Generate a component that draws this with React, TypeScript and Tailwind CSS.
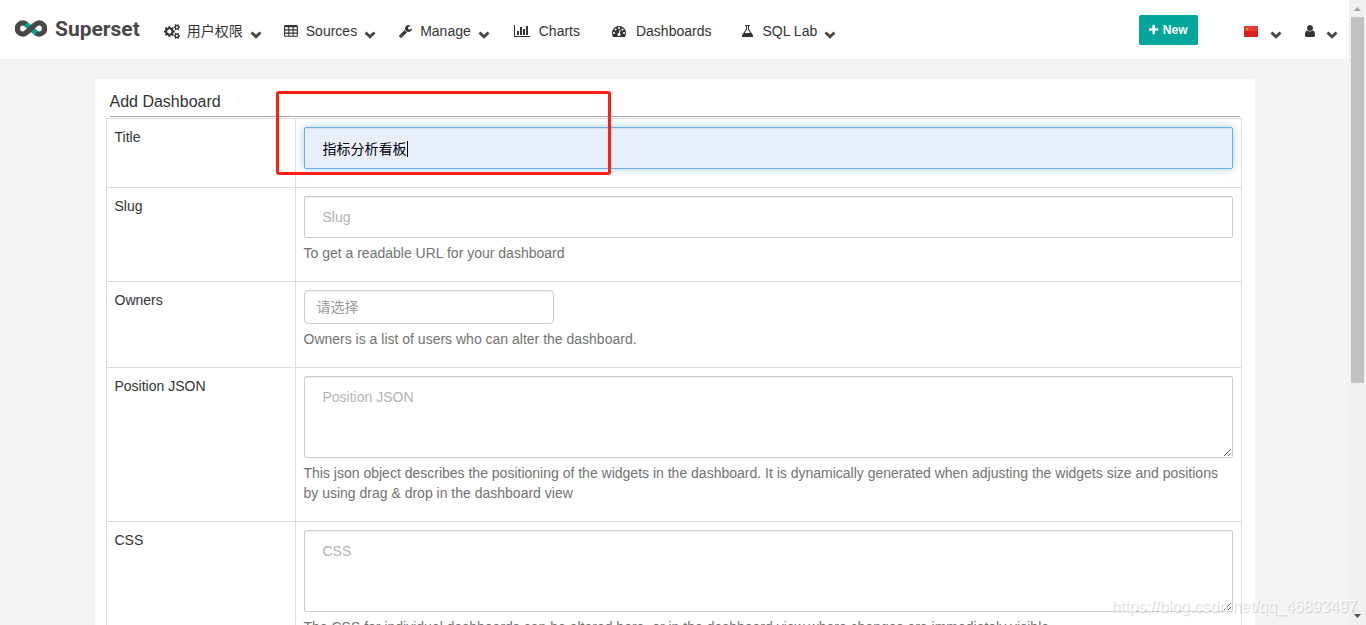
import { useState } from "react";
import type { ReactNode } from "react";

const icons = {
  cogs: {
    box: "0 0 1920 1792",
    d: "M896 896q0-106-75-181t-181-75-181 75-75 181 75 181 181 75 181-75 75-181zm768 512q0-52-38-90t-90-38-90 38-38 90q0 53 37.500 90.500t90.500 37.500 90.500-37.500 37.500-90.500zm0-1024q0-52-38-90t-90-38-90 38-38 90q0 53 37.500 90.500t90.500 37.500 90.500-37.500 37.500-90.500zm-384 421v185q0 10-7 19.500t-16 10.500l-155 24q-11 35-32 76 34 48 90 115 7 11 7 20 0 12-7 19-23 30-82.500 89.500t-78.500 59.500q-11 0-21-7l-115-90q-37 19-77 31-11 108-23 155-7 24-30 24h-186q-11 0-20-7.500t-10-17.500l-23-153q-34-10-75-31l-118 89q-7 7-20 7-11 0-21-8-144-133-144-160 0-9 7-19 10-14 41-53t47-61q-23-44-35-82l-152-24q-10-1-17-9.500t-7-19.500v-185q0-10 7-19.500t16-10.500l155-24q11-35 32-76-34-48-90-115-7-11-7-20 0-12 7-20 22-30 82-89t79-59q11 0 21 7l115 90q34-18 77-32 11-108 23-154 7-24 30-24h186q11 0 20 7.500t10 17.500l23 153q34 10 75 31l118-89q8-7 20-7 11 0 21 8 144 133 144 160 0 8-7 19-12 16-42 54t-45 60q23 48 34 82l152 23q10 2 17 10.500t7 19.500zm640 533v140q0 16-149 31-12 27-30 52 51 113 51 138 0 4-4 7-122 71-124 71-8 0-46-47t-52-68q-20 2-30 2t-30-2q-14 21-52 68t-46 47q-2 0-124-71-4-3-4-7 0-25 51-138-18-25-30-52-149-15-149-31v-140q0-16 149-31 13-29 30-52-51-113-51-138 0-4 4-7 4-2 35-20t59-34 30-16q8 0 46 46.500t52 67.500q20-2 30-2t30 2q51-71 92-112l6-2q4 0 124 70 4 3 4 7 0 25-51 138 17 23 30 52 149 15 149 31zm0-1024v140q0 16-149 31-12 27-30 52 51 113 51 138 0 4-4 7-122 71-124 71-8 0-46-47t-52-68q-20 2-30 2t-30-2q-14 21-52 68t-46 47q-2 0-124-71-4-3-4-7 0-25 51-138-18-25-30-52-149-15-149-31v-140q0-16 149-31 13-29 30-52-51-113-51-138 0-4 4-7 4-2 35-20t59-34 30-16q8 0 46 46.500t52 67.500q20-2 30-2t30 2q51-71 92-112l6-2q4 0 124 70 4 3 4 7 0 25-51 138 17 23 30 52 149 15 149 31z",
  },
  table: {
    box: "0 0 1664 1792",
    d: "M512 1376v-192q0-14-9-23t-23-9h-320q-14 0-23 9t-9 23v192q0 14 9 23t23 9h320q14 0 23-9t9-23zm0-384v-192q0-14-9-23t-23-9h-320q-14 0-23 9t-9 23v192q0 14 9 23t23 9h320q14 0 23-9t9-23zm512 384v-192q0-14-9-23t-23-9h-320q-14 0-23 9t-9 23v192q0 14 9 23t23 9h320q14 0 23-9t9-23zm-512-768v-192q0-14-9-23t-23-9h-320q-14 0-23 9t-9 23v192q0 14 9 23t23 9h320q14 0 23-9t9-23zm512 384v-192q0-14-9-23t-23-9h-320q-14 0-23 9t-9 23v192q0 14 9 23t23 9h320q14 0 23-9t9-23zm512 384v-192q0-14-9-23t-23-9h-320q-14 0-23 9t-9 23v192q0 14 9 23t23 9h320q14 0 23-9t9-23zm-512-768v-192q0-14-9-23t-23-9h-320q-14 0-23 9t-9 23v192q0 14 9 23t23 9h320q14 0 23-9t9-23zm512 384v-192q0-14-9-23t-23-9h-320q-14 0-23 9t-9 23v192q0 14 9 23t23 9h320q14 0 23-9t9-23zm0-384v-192q0-14-9-23t-23-9h-320q-14 0-23 9t-9 23v192q0 14 9 23t23 9h320q14 0 23-9t9-23zm128-320v1088q0 66-47 113t-113 47h-1344q-66 0-113-47t-47-113v-1088q0-66 47-113t113-47h1344q66 0 113 47t47 113z",
  },
  wrench: {
    box: "64 0 1664 1792",
    d: "M448 1472q0-26-19-45t-45-19-45 19-19 45 19 45 45 19 45-19 19-45zm644-420l-682 682q-37 37-90 37-52 0-91-37l-106-108q-38-36-38-90 0-53 38-91l681-681q39 98 114.500 173.500t173.500 114.500zm634-435q0 39-23 106-47 134-164.500 217.500t-258.500 83.500q-185 0-316.500-131.500t-131.500-316.500 131.500-316.500 316.500-131.500q58 0 121.500 16.500t107.500 46.500q16 11 16 28t-16 28l-293 169v224l193 107q5-3 79-48.500t135.500-81 70.500-35.500q15 0 23.500 10t8.500 25z",
  },
  chart: {
    box: "0 0 2048 1792",
    d: "M640 896v512h-256v-512h256zm384-512v1024h-256v-1024h256zm1024 1152v128h-2048v-1536h128v1408h1920zm-640-896v768h-256v-768h256zm384-384v1152h-256v-1152h256z",
  },
  dashboard: {
    box: "0 0 1792 1792",
    d: "M384 1152q0-53-37.500-90.500t-90.500-37.500-90.500 37.500-37.500 90.500 37.500 90.500 90.500 37.500 90.500-37.500 37.500-90.500zm192-448q0-53-37.500-90.500t-90.500-37.500-90.500 37.500-37.500 90.500 37.500 90.500 90.500 37.500 90.500-37.500 37.500-90.500zm428 481l101-382q6-26-7.500-48.500t-38.500-29.500-48 6.500-30 39.500l-101 382q-60 5-107 43.500t-63 98.500q-20 77 20 146t117 89 146-20 89-117q16-60-6-117t-72-91zm660-33q0-53-37.500-90.500t-90.500-37.500-90.500 37.500-37.500 90.500 37.500 90.500 90.500 37.500 90.500-37.500 37.500-90.500zm-640-640q0-53-37.500-90.500t-90.500-37.500-90.500 37.500-37.500 90.500 37.500 90.500 90.500 37.500 90.500-37.500 37.500-90.500zm448 192q0-53-37.500-90.500t-90.500-37.500-90.500 37.500-37.500 90.500 37.500 90.500 90.500 37.500 90.500-37.500 37.500-90.500zm320 448q0 261-141 483-19 29-54 29h-1402q-35 0-54-29-141-221-141-483 0-182 71-348t191-286 286-191 348-71 348 71 286 191 191 286 71 348z",
  },
  flask: {
    box: "0 0 1664 1792",
    d: "M1527 1447q56 89 21.500 153t-140.500 64h-1152q-106 0-140.500-64t21.500-153l503-793v-399h-64q-26 0-45-19t-19-45 19-45 45-19h512q26 0 45 19t19 45-19 45-45 19h-64v399zm-779-725l-272 430h712l-272-430-20-31v-436h-128v436z",
  },
  plus: {
    box: "192 0 1408 1792",
    d: "M1600 736v192q0 40-28 68t-68 28h-416v416q0 40-28 68t-68 28h-192q-40 0-68-28t-28-68v-416h-416q-40 0-68-28t-28-68v-192q0-40 28-68t68-28h416v-416q0-40 28-68t68-28h192q40 0 68 28t28 68v416h416q40 0 68 28t28 68z",
  },
  user: {
    box: "256 0 1280 1792",
    d: "M1536 1399q0 109-62.500 187t-150.500 78h-854q-88 0-150.500-78t-62.500-187q0-85 8.500-160.500t31.500-152 58.500-131 94-89 134.500-34.500q131 128 313 128t313-128q76 0 134.500 34.500t94 89 58.500 131 31.500 152 8.500 160.500zm-256-887q0 159-112.500 271.500t-271.500 112.500-271.500-112.500-112.500-271.500 112.500-271.500 271.500-112.500 271.500 112.500 112.500 271.500z",
  },
};

function Icon({ name, className = "h-[14px]" }: { name: keyof typeof icons; className?: string }) {
  return (
    <svg viewBox={icons[name].box} className={`w-auto ${className}`} fill="currentColor" aria-hidden="true">
      <path d={icons[name].d} />
    </svg>
  );
}

function Caret() {
  return (
    <svg viewBox="0 0 12 8" className="mt-[7px] h-2 w-3 shrink-0" fill="none" aria-hidden="true">
      <path d="M1.500 1.500 6 5.700 10.500 1.500" stroke="#484848" strokeWidth="2.900" />
    </svg>
  );
}

function Logo() {
  return (
    <svg viewBox="0 0 32 17" className="h-[17px] w-8" fill="none" aria-hidden="true">
      <path d="M10 3.400 22 13.800" stroke="#00A699" strokeWidth="5.400" />
      <path
        d="M10.800 4C9.800 3.200 9 2.900 8 2.900a5.400 5.400 0 1 0 0 11.200C12.800 14.100 19.200 2.900 24 2.900a5.400 5.400 0 1 1 0 11.200C23 14.100 22.200 13.800 21.200 13"
        stroke="#484848"
        strokeWidth="5.400"
      />
    </svg>
  );
}

function Flag() {
  return (
    <svg viewBox="0 0 14 11" className="h-[11px] w-[14px]" aria-hidden="true">
      <rect width="14" height="11" fill="#d81e1e" />
      <rect width="14" height="5" fill="#e23a33" />
      <path d="M3 1.300 3.400 2.500h1.200l-1 .8.400 1.200L3 3.800l-1 .7.400-1.200-1-.8h1.200z" fill="#f5a83a" />
      <path d="M5.500 1h.8v.8h-.8zM6.500 2.500h.8v.8h-.8zM5.500 4.200h.8v.8h-.8z" fill="#ef8a38" />
    </svg>
  );
}

const navItems: { label: string; icon: ReactNode; menu?: boolean }[] = [
  { label: "用户权限", icon: <Icon name="cogs" className="h-[15px]" />, menu: true },
  { label: "Sources", icon: <Icon name="table" className="h-[15px]" />, menu: true },
  { label: "Manage", icon: <Icon name="wrench" />, menu: true },
  { label: "Charts", icon: <Icon name="chart" /> },
  { label: "Dashboards", icon: <Icon name="dashboard" /> },
  { label: "SQL Lab", icon: <Icon name="flask" />, menu: true },
];

function Navbar() {
  return (
    <header className="flex h-[59px] items-center bg-white pr-[11px] pl-[15px] text-[#333]">
      <a href="#" className="flex items-center gap-2 pb-[2px]">
        <Logo />
        <span className="font-['Roboto',sans-serif] text-[21px] leading-6 font-bold text-[#484848]">
          Superset
        </span>
      </a>
      <nav className="ml-[11px]">
        <ul className="flex items-center pt-[3px]">
          {navItems.map(({ label, icon, menu }) => (
            <li key={label} className={menu ? "pr-2 pl-3" : "px-[15px]"}>
              <a href="#" className="flex items-center whitespace-nowrap">
                <span className="flex w-[18px] justify-center">{icon}</span>
                <span className={menu ? "mr-[7px] ml-[6px]" : "ml-2"}>{label}</span>
                {menu && <Caret />}
              </a>
            </li>
          ))}
        </ul>
      </nav>
      <div className="ml-auto flex items-center">
        <button
          type="button"
          className="flex h-[30px] w-[59px] items-center justify-center gap-1 rounded-[2px] bg-[#00A699] text-xs font-bold text-white"
        >
          <Icon name="plus" className="h-3" />
          New
        </button>
        <button type="button" aria-label="Language" className="ml-[46px] flex items-center gap-3 pt-[3px]">
          <Flag />
          <Caret />
        </button>
        <button type="button" aria-label="User" className="ml-[23px] flex items-center gap-[11px] pt-[3px]">
          <Icon name="user" />
          <Caret />
        </button>
      </div>
    </header>
  );
}

const control =
  "block w-full rounded-[2px] border border-[#ccc] bg-white px-[18px] py-[10px] leading-5 shadow-[inset_0_1px_1px_rgba(0,0,0,0.075)] outline-none placeholder:text-[#b3b3b3]";

function Row({ id, label, help, children }: { id: string; label: string; help?: string; children: ReactNode }) {
  return (
    <tr>
      <th scope="row" className="w-[189px] border border-[#ddd] p-2 text-left align-top font-normal">
        <label htmlFor={id}>{label}</label>
      </th>
      <td className="border border-[#ddd] p-2 pb-[18px] align-top">
        {children}
        {help && <p className="mt-[5px] text-[#737373]">{help}</p>}
      </td>
    </tr>
  );
}

function DashboardForm() {
  const [title, setTitle] = useState("指标分析看板");

  return (
    <form className="mx-auto mt-5 max-w-[1160px] rounded-[2px] bg-white py-3 pr-[13px] pl-[11px]">
      <h1 className="mr-[2px] mb-px ml-1 border-b border-[#aaa] pb-[3px] text-base leading-[22px]">
        Add Dashboard
      </h1>
      <table className="w-full border-collapse leading-5">
        <tbody>
          <Row id="title" label="Title">
            <div className="relative">
              <input
                id="title"
                value={title}
                onChange={(e) => setTitle(e.target.value)}
                className="block h-[42px] w-full rounded-[2px] border border-[#66afe9] bg-[#e8eefc] px-[18px] text-black shadow-[inset_0_1px_1px_rgba(0,0,0,0.075),0_0_8px_rgba(102,175,233,0.6)] outline-none"
              />
              <span className="absolute top-[14px] left-[103px] h-4 w-px bg-black" />
            </div>
          </Row>
          <Row id="slug" label="Slug" help="To get a readable URL for your dashboard">
            <input id="slug" placeholder="Slug" className={control} />
          </Row>
          <Row id="owners" label="Owners" help="Owners is a list of users who can alter the dashboard.">
            <input
              id="owners"
              placeholder="请选择"
              className="block h-[34px] w-[250px] rounded-[4px] border border-[#ccc] px-3 shadow-[inset_0_1px_1px_rgba(0,0,0,0.075)] outline-none placeholder:text-[#999]"
            />
          </Row>
          <Row
            id="position"
            label="Position JSON"
            help="This json object describes the positioning of the widgets in the dashboard. It is dynamically generated when adjusting the widgets size and positions by using drag & drop in the dashboard view"
          >
            <textarea id="position" rows={3} placeholder="Position JSON" className={control} />
          </Row>
          <Row
            id="css"
            label="CSS"
            help="The CSS for individual dashboards can be altered here, or in the dashboard view where changes are immediately visible"
          >
            <textarea id="css" rows={3} placeholder="CSS" className={control} />
          </Row>
        </tbody>
      </table>
    </form>
  );
}

function Scrollbar() {
  return (
    <div className="flex w-[17px] shrink-0 flex-col bg-[#f0f0f0]" aria-hidden="true">
      <svg viewBox="0 0 17 17" className="h-[17px] shrink-0">
        <path d="M5 11h7L8.500 7z" fill="#a3a3a3" />
      </svg>
      <div className="flex-1 px-[2px]">
        <div className="h-[62%] bg-[#c1c1c1]" />
      </div>
      <svg viewBox="0 0 17 17" className="h-[17px] shrink-0">
        <path d="M5 6h7L8.500 10z" fill="#505050" />
      </svg>
    </div>
  );
}

export default function App() {
  return (
    <div className="relative flex h-screen overflow-hidden bg-[#f4f4f4] font-['Liberation_Sans','Noto_Sans_CJK_SC',sans-serif] text-sm text-[#333]">
      <div className="min-w-0 flex-1 overflow-hidden">
        <Navbar />
        <main>
          <DashboardForm />
        </main>
      </div>
      <Scrollbar />
      <div className="pointer-events-none absolute top-[91px] left-[276px] h-[84px] w-[335px] rounded-[3px] border-3 border-[#ff1f10]" />
      <span className="pointer-events-none absolute right-[9px] bottom-[6px] text-base text-white/80 [text-shadow:1px_1px_1px_rgba(0,0,0,0.18)]">
        https://blog.csdn.net/qq_46893497
      </span>
    </div>
  );
}
